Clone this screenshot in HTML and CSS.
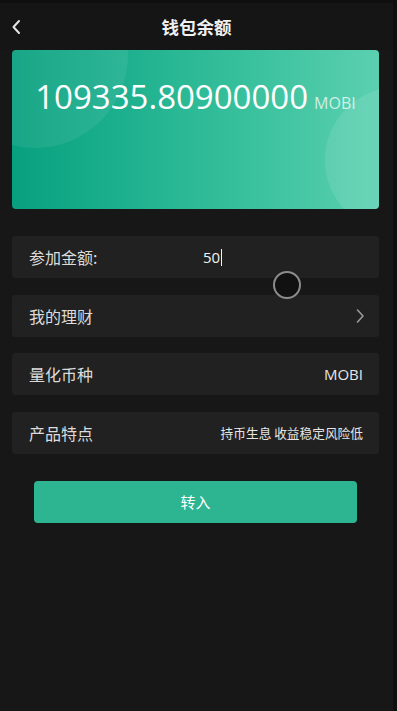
FILE: index.html
```html
<!DOCTYPE html>
<html lang="zh">
<head>
    <meta charset="UTF-8">
    <title>钱包余额</title>
    <link rel="stylesheet" href="styles.css">
</head>
<body>
<div class="page">
    <div class="top-bar">
        <span class="back-btn">
            <svg width="10" height="16" viewBox="0 0 10 16"><path d="M8 2 L2.5 8 L8 14" fill="none" stroke="#e6e6e6" stroke-width="2" stroke-linecap="round" stroke-linejoin="round"/></svg>
        </span>
        <h2>钱包余额</h2>
    </div>

    <!-- 余额卡片 -->
    <div class="balance-card">
        <span class="bubble bubble-left"></span>
        <span class="bubble bubble-right"></span>
        <div class="balance">
            <span class="amount">109335.80900000</span>
            <span class="unit">MOBI</span>
        </div>
    </div>

    <div class="form-list">
        <div class="form-item">
            <span class="item-label">参加金额:</span>
            <span class="item-input">50<i class="caret"></i></span>
            <span class="touch-dot"></span>
        </div>
        <div class="form-item">
            <span class="item-label">我的理财</span>
            <span class="item-arrow">
                <svg width="10" height="16" viewBox="0 0 10 16"><path d="M2.5 2 L8 8 L2.5 14" fill="none" stroke="#9a9a9a" stroke-width="1.6" stroke-linecap="round" stroke-linejoin="round"/></svg>
            </span>
        </div>
        <div class="form-item">
            <span class="item-label">量化币种</span>
            <span class="item-value">MOBI</span>
        </div>
        <div class="form-item">
            <span class="item-label">产品特点</span>
            <span class="item-value small">持币生息 收益稳定风险低</span>
        </div>
    </div>

    <div class="footer">
        <button class="submit-btn">转入</button>
    </div>
</div>
</body>
</html>
```

FILE: styles.css
```css
:root {
    --page-bg: #171717;
    --outer-bg: #0f0f0f;
    --item-bg: #212121;
    --text: #e0e0e0;
    --accent: #2db592;
}

body {
    margin: 0;
    padding: 0;
    background-color: var(--outer-bg);
    font-family: "Open Sans", "Noto Sans CJK SC", sans-serif;
    color: var(--text);
}
.page {
    width: 393px;
    min-height: 708px;
    margin-top: 3px;
    background-color: var(--page-bg);
}

/* ========== 顶部 ========== */
.top-bar {
    position: relative;
    display: flex;
    align-items: center;
    justify-content: center;
    height: 47px;
    background-color: #151515;
}
.top-bar h2 {
    margin: 0;
    font-size: 17.5px;
    font-weight: bold;
    color: #f0f0f0;
    font-family: "Noto Sans CJK SC", sans-serif;
}
.back-btn {
    position: absolute;
    left: 11px;
    top: 16px;
    display: flex;
}

/* ========== 余额卡片 ========== */
.balance-card {
    position: relative;
    overflow: hidden;
    height: 159px;
    margin: 0 14px 0 12px;
    border-radius: 4px;
    background: linear-gradient(90deg, #07a07f 0%, #1db08e 30%, #3ac19d 65%, #5bd0b0 100%);
}
.bubble {
    position: absolute;
    border-radius: 50%;
    background-color: rgba(255, 255, 255, 0.07);
}
.bubble-left {
    left: -70px;
    top: -88px;
    width: 186px;
    height: 186px;
}
.bubble-right {
    left: 313px;
    top: 37px;
    width: 146px;
    height: 146px;
    background-color: rgba(255, 255, 255, 0.1);
}
.balance {
    position: relative;
    display: flex;
    align-items: baseline;
    justify-content: center;
    gap: 6px;
    padding-top: 24px;
}
.amount {
    font-size: 33px;
    color: #fff;
    line-height: 46px;
}
.unit {
    font-size: 16px;
    color: rgba(255, 255, 255, 0.72);
}

/* ========== 表单 ========== */
.form-list {
    display: flex;
    flex-direction: column;
    gap: 16.6px;
    margin: 27px 14px 0 12px;
}
.form-item {
    position: relative;
    display: flex;
    align-items: center;
    justify-content: space-between;
    height: 42px;
    padding: 0 16px 0 17px;
    background-color: var(--item-bg);
    border-radius: 3px;
    font-size: 16px;
}
.item-label {
    font-family: "Noto Sans CJK SC", sans-serif;
    color: #dcdcdc;
}
.item-input {
    position: absolute;
    left: 191px;
    display: flex;
    align-items: center;
    color: #f2f2f2;
    font-size: 15px;
}
.caret {
    display: inline-block;
    width: 1px;
    height: 17px;
    margin-left: 1px;
    background-color: #f2f2f2;
}
.touch-dot {
    position: absolute;
    left: 261px;
    top: 35px;
    width: 24px;
    height: 24px;
    border: 2px solid #8c8c8c;
    border-radius: 50%;
    background-color: #111;
    z-index: 2;
}
.item-arrow {
    display: flex;
    margin-right: -2px;
}
.item-value {
    color: #e6e6e6;
    font-size: 15px;
}
.item-value.small {
    font-size: 12.7px;
    font-family: "Noto Sans CJK SC", sans-serif;
}

/* ========== 按鈕 ========== */
.footer {
    padding: 27px 36px 0 34px;
}
.submit-btn {
    display: block;
    width: 100%;
    height: 42px;
    border: none;
    border-radius: 4px;
    background-color: var(--accent);
    color: #fff;
    font-size: 15px;
    font-family: "Noto Sans CJK SC", sans-serif;
    cursor: pointer;
}
```
